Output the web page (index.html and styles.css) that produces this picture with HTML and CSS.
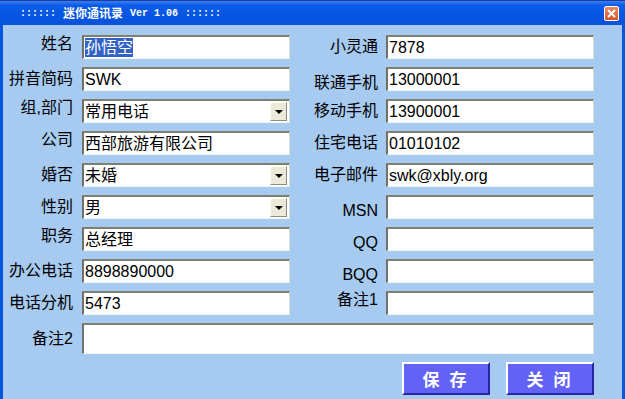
FILE: index.html
```html
<!DOCTYPE html>
<html lang="zh-CN">
<head>
    <meta charset="UTF-8" />
    <title>迷你通讯录 Ver 1.06</title>
    <link rel="stylesheet" href="styles.css">
</head>
<body>
    <div class="window">
        <div class="titlebar">
            <div class="title">
                <span class="mono">::::::</span>
                <span class="cn">迷你通讯录</span>
                <span class="mono">Ver 1.06</span>
                <span class="mono">::::::</span>
            </div>
            <div class="close">
                <svg width="9" height="9" viewBox="0 0 9 9"><path d="M1 1L8 8M8 1L1 8" stroke="#fff" stroke-width="2"/></svg>
            </div>
        </div>

        <div class="content">
            <div class="form">
                <div class="lbl up">姓名</div>
                <div class="field"><span class="sel">孙悟空</span></div>
                <div class="lbl r">小灵通</div>
                <div class="field">7878</div>

                <div class="lbl">拼音简码</div>
                <div class="field">SWK</div>
                <div class="lbl r dn">联通手机</div>
                <div class="field">13000001</div>

                <div class="lbl up">组,部门</div>
                <div class="field combo">常用电话<span class="drop"></span></div>
                <div class="lbl r">移动手机</div>
                <div class="field">13900001</div>

                <div class="lbl up">公司</div>
                <div class="field">西部旅游有限公司</div>
                <div class="lbl r">住宅电话</div>
                <div class="field">01010102</div>

                <div class="lbl">婚否</div>
                <div class="field combo">未婚<span class="drop"></span></div>
                <div class="lbl r">电子邮件</div>
                <div class="field">swk@xbly.org</div>

                <div class="lbl">性别</div>
                <div class="field combo">男<span class="drop"></span></div>
                <div class="lbl r dn">MSN</div>
                <div class="field"></div>

                <div class="lbl up">职务</div>
                <div class="field">总经理</div>
                <div class="lbl r dn">QQ</div>
                <div class="field"></div>

                <div class="lbl">办公电话</div>
                <div class="field">8898890000</div>
                <div class="lbl r dn">BQQ</div>
                <div class="field"></div>

                <div class="lbl">电话分机</div>
                <div class="field">5473</div>
                <div class="lbl r up">备注1</div>
                <div class="field"></div>

                <div class="lbl">备注2</div>
                <div class="field wide"></div>
            </div>

            <div class="actions">
                <button class="btn">保 存</button>
                <button class="btn">关 闭</button>
            </div>
        </div>
    </div>
</body>
</html>
```

FILE: styles.css
```css
body {
    margin: 0;
    font-family: "Liberation Sans", "Noto Sans CJK SC", sans-serif;
    background-color: #a6caf0;
}
.window {
    width: 625px;
    height: 399px;
    overflow: hidden;
    display: flex;
    flex-direction: column;
}
.titlebar {
    height: 25px;
    flex: none;
    box-sizing: border-box;
    display: flex;
    align-items: center;
    justify-content: space-between;
    padding: 0 6px 0 20px;
    border-top: 1px solid #1c3c9c;
    background: linear-gradient(to bottom, #3a80f4 0%, #0c5ce8 18%, #0656e2 60%, #0a52d8 100%);
}
.title {
    display: flex;
    align-items: center;
    gap: 7px;
    color: #ffffff;
    font-weight: bold;
}
.title .mono {
    font-family: "Liberation Mono", monospace;
    font-size: 10px;
}
.title .cn {
    font-family: "Noto Sans CJK SC", sans-serif;
    font-size: 12px;
    line-height: 14px;
}
.close {
    width: 15px;
    height: 15px;
    box-sizing: border-box;
    border: 1px solid #ffffff;
    border-radius: 2px;
    background: linear-gradient(to bottom, #ec8a62, #d5522a);
    display: flex;
    align-items: center;
    justify-content: center;
}
.content {
    flex: 1;
    border-left: 3px solid #0656e2;
    border-right: 3px solid #0656e2;
    padding-top: 10px;
}
.form {
    display: grid;
    grid-template-columns: 79px 208px 96px 208px;
    grid-template-rows: repeat(9, 24px) 31px;
    row-gap: 8px;
}
.lbl {
    display: flex;
    align-items: center;
    justify-content: flex-end;
    box-sizing: border-box;
    padding-right: 9px;
    font-size: 16px;
    line-height: 18px;
    white-space: nowrap;
    color: #000000;
}
.lbl.r {
    padding-right: 8px;
}
.lbl.up {
    padding-bottom: 7px;
}
.lbl.dn {
    padding-top: 8px;
}
.field {
    box-sizing: border-box;
    background-color: #ffffff;
    border-top: 2px solid #7f7f70;
    border-left: 2px solid #707068;
    border-right: 1px solid #dcdcd4;
    border-bottom: 1px solid #f4f4f0;
    padding-left: 1px;
    font-size: 16px;
    line-height: 19px;
    display: flex;
    align-items: center;
    white-space: nowrap;
}
.sel {
    background-color: #3162c4;
    color: #ffffff;
}
.combo {
    justify-content: space-between;
    padding-right: 2px;
}
.drop {
    width: 17px;
    height: 19px;
    box-sizing: border-box;
    background-color: #ece9d8;
    border: 1px solid;
    border-color: #ffffff #8c8c84 #8c8c84 #ffffff;
    display: flex;
    align-items: center;
    justify-content: center;
}
.drop::after {
    content: "";
    border-left: 4px solid transparent;
    border-right: 4px solid transparent;
    border-top: 4px solid #000000;
}
.wide {
    grid-column: 2 / 5;
}
.actions {
    display: flex;
    justify-content: flex-end;
    gap: 16px;
    padding-right: 28px;
    margin-top: 8px;
}
.btn {
    width: 88px;
    height: 33px;
    padding: 0;
    background-color: #6262f6;
    border: 2px solid;
    border-color: #ffffff #2626a6 #2626a6 #ffffff;
    color: #ffffff;
    font-family: "Noto Sans CJK SC", sans-serif;
    font-weight: bold;
    font-size: 17px;
    letter-spacing: 3px;
}
```
